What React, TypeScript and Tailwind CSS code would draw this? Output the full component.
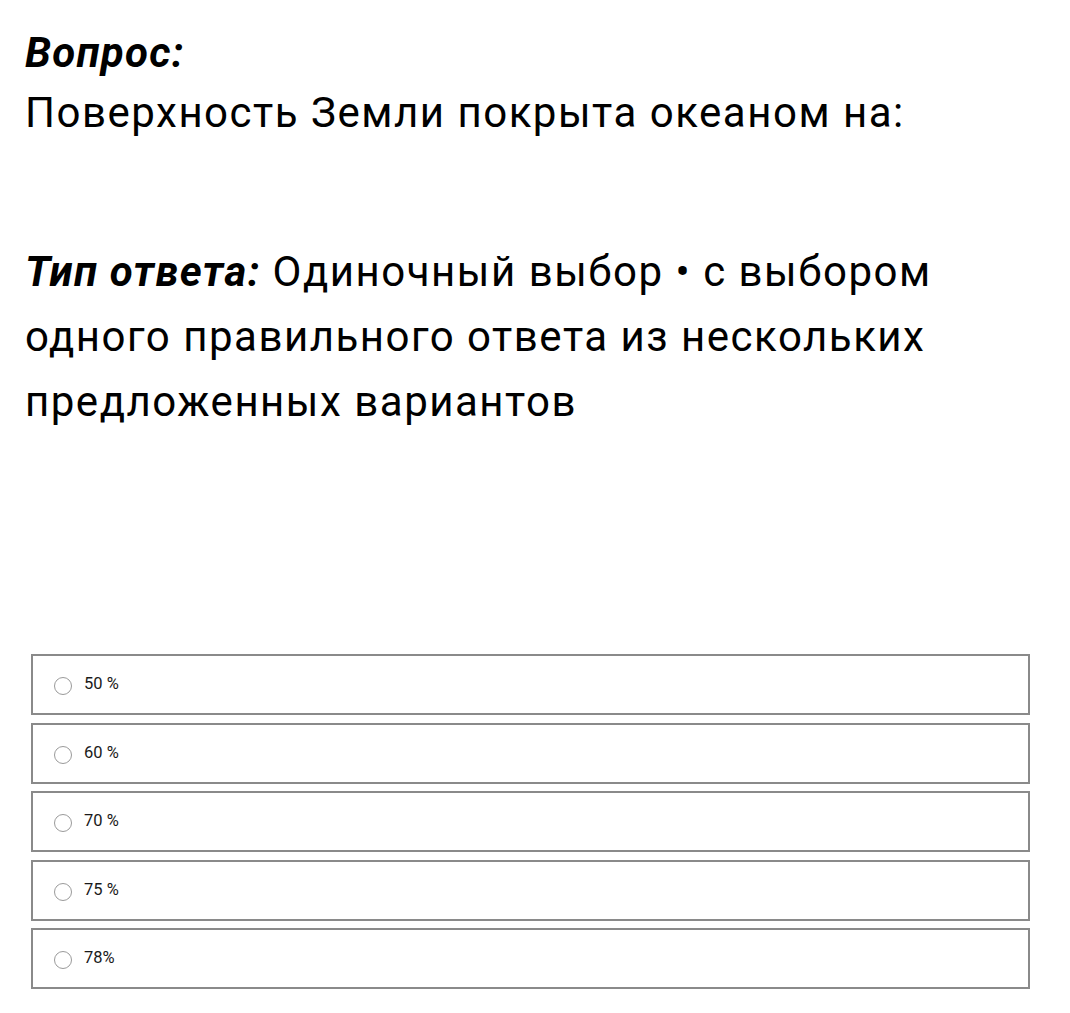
import React from "react";

const options = ["50 %", "60 %", "70 %", "75 %", "78%"];

export default function App() {
  return (
    <div className="min-h-[1013px] w-full bg-white text-black">
      <div className="pl-[25px] pt-[23px] font-['Roboto',sans-serif] text-[42px] tracking-[0.036em]">
        <div className="leading-[60px] font-bold italic tracking-[0.03em]">Вопрос:</div>
        <div className="leading-[60px]">Поверхность Земли покрыта океаном на:</div>
        <div className="mt-[96px] leading-[65px] pr-[40px]">
          <span className="font-bold italic tracking-[0.03em]">Тип ответа:</span>{" "}
          <span>Одиночный выбор • с выбором одного правильного ответа из нескольких предложенных вариантов</span>
        </div>
      </div>
      <div className="mt-[220px] ml-[31px] mr-[40px] flex flex-col gap-[7.5px] font-['Roboto',sans-serif]">
        {options.map((o) => (
          <div
            key={o}
            className="flex h-[61px] items-center border-2 border-[#8a8a8a] pl-[21px]"
          >
            <span className="mt-[3px] box-border h-[18px] w-[18px] rounded-full border border-[#9a9a9a] bg-white" />
            <span className="ml-[12px] text-[16.5px] text-[#1a1a1a]">{o}</span>
          </div>
        ))}
      </div>
    </div>
  );
}
